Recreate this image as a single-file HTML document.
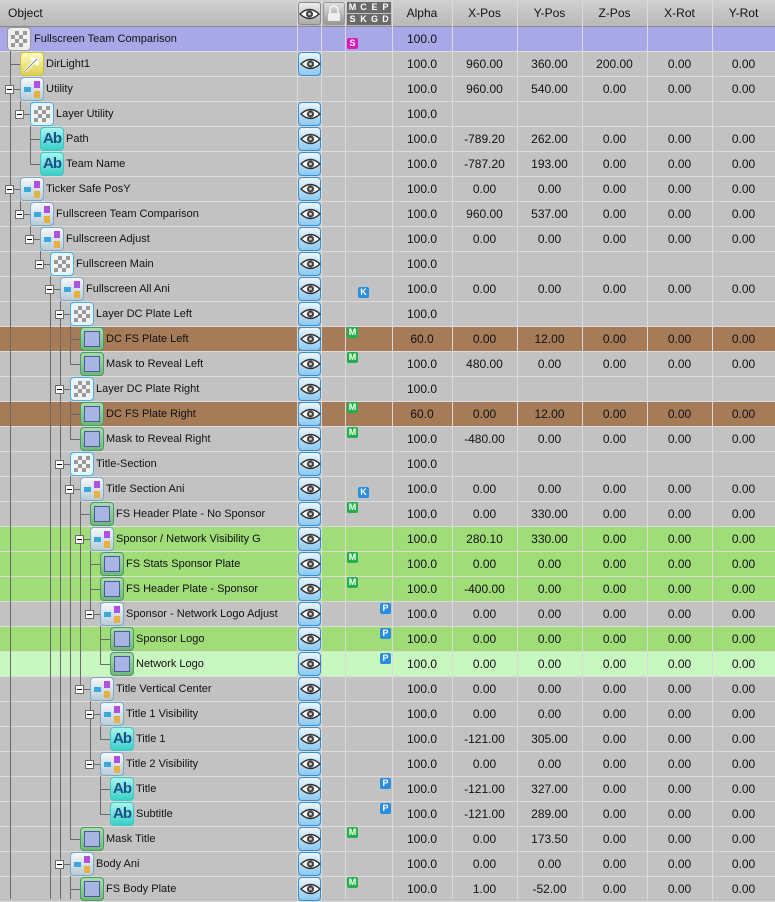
<!DOCTYPE html>
<html><head><meta charset="utf-8"><style>
*{box-sizing:border-box;margin:0;padding:0}
body{width:775px;height:899px;overflow:hidden;background:#c2c2c2;font-family:"Liberation Sans",sans-serif;font-size:12px;color:#111;position:relative}
.hd{position:absolute;left:0;top:0;width:775px;height:27px;background:linear-gradient(#d2d2d2,#b8b8b8);border-bottom:1px solid #8a8a8a}
.hd span{position:absolute;top:0;line-height:27px;text-align:center}
.r{position:absolute;left:0;width:775px;height:25px;border-bottom:1px solid #dcdcdc}
.r span{position:absolute;top:0;line-height:24px;white-space:nowrap}
.r span.n{font-size:11px}
.c{position:absolute;top:0;width:1px;height:899px;background:#dadada}
.v{text-align:center}
.a{left:392px;width:60px}.x{left:452px;width:65px}.y{left:517px;width:65px}.z{left:582px;width:65px}.xr{left:647px;width:65px}.yr{left:712px;width:63px}
.ic{position:absolute;top:0;width:24px;height:24px;border-radius:4px;border:1px solid #777}
.ck{border-color:#4ab0e0;background:#e8f4fb;padding:3px}
.ck i{display:block;width:16px;height:16px;background:repeating-conic-gradient(#9a9a9a 0 25%,#f2f2f2 0 50%) 0 0/8px 8px}
.ck0{border-color:#999;background:#eee}
.gr{border-color:#7aa8c0;background:linear-gradient(#f4f8fa,#b8ccd8)}
.gr b{position:absolute;display:block}
.ab{border-color:#40c8c0;background:linear-gradient(#a8f4ee,#38d0c8);color:#1b4f86;font-weight:bold;font-size:15px;line-height:22px;text-align:center;letter-spacing:-1px}
.pl{border-color:#4a9a5a;background:linear-gradient(#a8dcae,#70b87c);padding:3px}
.pl i{display:block;width:16px;height:16px;background:#a8b4e4;border:1px solid #4c5a9c}
.lt{border-color:#c8c040;background:linear-gradient(#fffcc0,#dcd050)}
.eye{position:absolute;left:298px;top:0;width:23px;height:24px;border-radius:4px;border:1px solid #3a8ed0;background:linear-gradient(#eaf6ff,#8ccaf4)}
.eye svg{position:absolute;left:1px;top:5px}
.bd{position:absolute;width:11px;height:11px;border-radius:2px;color:#fff;font-size:9px;font-weight:bold;line-height:11px;text-align:center}
.M{background:#22b048;left:347px;top:0}
.S{background:#e018b8;left:347px;top:11px}
.K{background:#2a8ee0;left:358px;top:10px}
.P{background:#2a8ee0;left:380px;top:1px}
.vl{position:absolute;width:1px;background:#6a6a6a}
.hl{position:absolute;height:1px;background:#6a6a6a}
.mb{position:absolute;width:9px;height:9px;border:1px solid #6a6a6a;background:#fff}
.mb:after{content:"";position:absolute;left:1px;top:3px;width:5px;height:1px;background:#000}
.mc{position:absolute;width:11px;height:11px;background:#6a6a6a;color:#fff;font-size:9px;font-weight:bold;line-height:11px;text-align:center}
</style></head><body>
<svg width="0" height="0" style="position:absolute"><symbol id="e" viewBox="0 0 21 12"><path d="M1 6 Q10.5 -3 20 6 Q10.5 15 1 6Z" fill="#fff" stroke="#333" stroke-width="1.5"/><circle cx="10.5" cy="6" r="3.6" fill="#444"/><circle cx="10.5" cy="6" r="1.4" fill="#ccc"/></symbol></svg>

<div class="hd">
<span style="left:8px;text-align:left">Object</span>
<div style="position:absolute;left:298px;top:2px;width:23px;height:23px;border-radius:3px;background:linear-gradient(#eee,#aaa);border:1px solid #888"><svg width="21" height="12" style="position:absolute;left:0;top:5px"><use href="#e"/></svg></div>
<div style="position:absolute;left:323px;top:2px;width:22px;height:23px;border-radius:3px;background:linear-gradient(#ddd,#999);border:1px solid #999"><svg width="20" height="21"><path d="M6 10 V7 A4 4 0 0 1 14 7 V10" stroke="#eee" stroke-width="2" fill="none"/><rect x="4" y="10" width="12" height="8" rx="1" fill="#eee"/></svg></div>
<div class="mc" style="left:347px;top:2px">M</div><div class="mc" style="left:358px;top:2px">C</div><div class="mc" style="left:369px;top:2px">E</div><div class="mc" style="left:380px;top:2px">P</div>
<div class="mc" style="left:347px;top:14px">S</div><div class="mc" style="left:358px;top:14px">K</div><div class="mc" style="left:369px;top:14px">G</div><div class="mc" style="left:380px;top:14px">D</div>
<span class="a">Alpha</span><span class="x">X-Pos</span><span class="y">Y-Pos</span><span class="z">Z-Pos</span><span class="xr">X-Rot</span><span class="yr">Y-Rot</span>
</div>

<div class="r" style="top:27px;background:#a8a8e8"><div class="ic ck ck0" style="left:7px"><i></i></div><span class="n" style="left:34px">Fullscreen Team Comparison</span><div class="bd S">S</div><span class="v a">100.0</span></div>
<div class="r" style="top:52px"><div class="ic lt" style="left:20px"><svg width="22" height="22"><path d="M4 18 L16 6 M10 6 L16 6 L16 12" stroke="#fff" stroke-width="3" fill="none"/><path d="M4 18 L16 6" stroke="#888" stroke-width="1"/></svg></div><span class="n" style="left:46px">DirLight1</span><div class="eye"><svg width="21" height="12"><use href="#e"/></svg></div><span class="v a">100.0</span><span class="v x">960.00</span><span class="v y">360.00</span><span class="v z">200.00</span><span class="v xr">0.00</span><span class="v yr">0.00</span></div>
<div class="r" style="top:77px"><div class="ic gr" style="left:20px"><b style="left:3px;top:9px;width:7px;height:5px;background:#3aa8e0"></b><b style="left:13px;top:3px;width:6px;height:7px;background:#b050e0"></b><b style="left:13px;top:13px;width:6px;height:7px;background:#e8b040"></b></div><span class="n" style="left:46px">Utility</span><span class="v a">100.0</span><span class="v x">960.00</span><span class="v y">540.00</span><span class="v z">0.00</span><span class="v xr">0.00</span><span class="v yr">0.00</span></div>
<div class="r" style="top:102px"><div class="ic ck" style="left:30px"><i></i></div><span class="n" style="left:56px">Layer Utility</span><div class="eye"><svg width="21" height="12"><use href="#e"/></svg></div><span class="v a">100.0</span></div>
<div class="r" style="top:127px"><div class="ic ab" style="left:40px">Ab</div><span class="n" style="left:66px">Path</span><div class="eye"><svg width="21" height="12"><use href="#e"/></svg></div><span class="v a">100.0</span><span class="v x">-789.20</span><span class="v y">262.00</span><span class="v z">0.00</span><span class="v xr">0.00</span><span class="v yr">0.00</span></div>
<div class="r" style="top:152px"><div class="ic ab" style="left:40px">Ab</div><span class="n" style="left:66px">Team Name</span><div class="eye"><svg width="21" height="12"><use href="#e"/></svg></div><span class="v a">100.0</span><span class="v x">-787.20</span><span class="v y">193.00</span><span class="v z">0.00</span><span class="v xr">0.00</span><span class="v yr">0.00</span></div>
<div class="r" style="top:177px"><div class="ic gr" style="left:20px"><b style="left:3px;top:9px;width:7px;height:5px;background:#3aa8e0"></b><b style="left:13px;top:3px;width:6px;height:7px;background:#b050e0"></b><b style="left:13px;top:13px;width:6px;height:7px;background:#e8b040"></b></div><span class="n" style="left:46px">Ticker Safe PosY</span><div class="eye"><svg width="21" height="12"><use href="#e"/></svg></div><span class="v a">100.0</span><span class="v x">0.00</span><span class="v y">0.00</span><span class="v z">0.00</span><span class="v xr">0.00</span><span class="v yr">0.00</span></div>
<div class="r" style="top:202px"><div class="ic gr" style="left:30px"><b style="left:3px;top:9px;width:7px;height:5px;background:#3aa8e0"></b><b style="left:13px;top:3px;width:6px;height:7px;background:#b050e0"></b><b style="left:13px;top:13px;width:6px;height:7px;background:#e8b040"></b></div><span class="n" style="left:56px">Fullscreen Team Comparison</span><div class="eye"><svg width="21" height="12"><use href="#e"/></svg></div><span class="v a">100.0</span><span class="v x">960.00</span><span class="v y">537.00</span><span class="v z">0.00</span><span class="v xr">0.00</span><span class="v yr">0.00</span></div>
<div class="r" style="top:227px"><div class="ic gr" style="left:40px"><b style="left:3px;top:9px;width:7px;height:5px;background:#3aa8e0"></b><b style="left:13px;top:3px;width:6px;height:7px;background:#b050e0"></b><b style="left:13px;top:13px;width:6px;height:7px;background:#e8b040"></b></div><span class="n" style="left:66px">Fullscreen Adjust</span><div class="eye"><svg width="21" height="12"><use href="#e"/></svg></div><span class="v a">100.0</span><span class="v x">0.00</span><span class="v y">0.00</span><span class="v z">0.00</span><span class="v xr">0.00</span><span class="v yr">0.00</span></div>
<div class="r" style="top:252px"><div class="ic ck" style="left:50px"><i></i></div><span class="n" style="left:76px">Fullscreen Main</span><div class="eye"><svg width="21" height="12"><use href="#e"/></svg></div><span class="v a">100.0</span></div>
<div class="r" style="top:277px"><div class="ic gr" style="left:60px"><b style="left:3px;top:9px;width:7px;height:5px;background:#3aa8e0"></b><b style="left:13px;top:3px;width:6px;height:7px;background:#b050e0"></b><b style="left:13px;top:13px;width:6px;height:7px;background:#e8b040"></b></div><span class="n" style="left:86px">Fullscreen All Ani</span><div class="eye"><svg width="21" height="12"><use href="#e"/></svg></div><div class="bd K">K</div><span class="v a">100.0</span><span class="v x">0.00</span><span class="v y">0.00</span><span class="v z">0.00</span><span class="v xr">0.00</span><span class="v yr">0.00</span></div>
<div class="r" style="top:302px"><div class="ic ck" style="left:70px"><i></i></div><span class="n" style="left:96px">Layer DC Plate Left</span><div class="eye"><svg width="21" height="12"><use href="#e"/></svg></div><span class="v a">100.0</span></div>
<div class="r" style="top:327px;background:#a67c58"><div class="ic pl" style="left:80px"><i></i></div><span class="n" style="left:106px">DC FS Plate Left</span><div class="eye"><svg width="21" height="12"><use href="#e"/></svg></div><div class="bd M">M</div><span class="v a">60.0</span><span class="v x">0.00</span><span class="v y">12.00</span><span class="v z">0.00</span><span class="v xr">0.00</span><span class="v yr">0.00</span></div>
<div class="r" style="top:352px"><div class="ic pl" style="left:80px"><i></i></div><span class="n" style="left:106px">Mask to Reveal Left</span><div class="eye"><svg width="21" height="12"><use href="#e"/></svg></div><div class="bd M">M</div><span class="v a">100.0</span><span class="v x">480.00</span><span class="v y">0.00</span><span class="v z">0.00</span><span class="v xr">0.00</span><span class="v yr">0.00</span></div>
<div class="r" style="top:377px"><div class="ic ck" style="left:70px"><i></i></div><span class="n" style="left:96px">Layer DC Plate Right</span><div class="eye"><svg width="21" height="12"><use href="#e"/></svg></div><span class="v a">100.0</span></div>
<div class="r" style="top:402px;background:#a67c58"><div class="ic pl" style="left:80px"><i></i></div><span class="n" style="left:106px">DC FS Plate Right</span><div class="eye"><svg width="21" height="12"><use href="#e"/></svg></div><div class="bd M">M</div><span class="v a">60.0</span><span class="v x">0.00</span><span class="v y">12.00</span><span class="v z">0.00</span><span class="v xr">0.00</span><span class="v yr">0.00</span></div>
<div class="r" style="top:427px"><div class="ic pl" style="left:80px"><i></i></div><span class="n" style="left:106px">Mask to Reveal Right</span><div class="eye"><svg width="21" height="12"><use href="#e"/></svg></div><div class="bd M">M</div><span class="v a">100.0</span><span class="v x">-480.00</span><span class="v y">0.00</span><span class="v z">0.00</span><span class="v xr">0.00</span><span class="v yr">0.00</span></div>
<div class="r" style="top:452px"><div class="ic ck" style="left:70px"><i></i></div><span class="n" style="left:96px">Title-Section</span><div class="eye"><svg width="21" height="12"><use href="#e"/></svg></div><span class="v a">100.0</span></div>
<div class="r" style="top:477px"><div class="ic gr" style="left:80px"><b style="left:3px;top:9px;width:7px;height:5px;background:#3aa8e0"></b><b style="left:13px;top:3px;width:6px;height:7px;background:#b050e0"></b><b style="left:13px;top:13px;width:6px;height:7px;background:#e8b040"></b></div><span class="n" style="left:106px">Title Section Ani</span><div class="eye"><svg width="21" height="12"><use href="#e"/></svg></div><div class="bd K">K</div><span class="v a">100.0</span><span class="v x">0.00</span><span class="v y">0.00</span><span class="v z">0.00</span><span class="v xr">0.00</span><span class="v yr">0.00</span></div>
<div class="r" style="top:502px"><div class="ic pl" style="left:90px"><i></i></div><span class="n" style="left:116px">FS Header Plate - No Sponsor</span><div class="eye"><svg width="21" height="12"><use href="#e"/></svg></div><div class="bd M">M</div><span class="v a">100.0</span><span class="v x">0.00</span><span class="v y">330.00</span><span class="v z">0.00</span><span class="v xr">0.00</span><span class="v yr">0.00</span></div>
<div class="r" style="top:527px;background:#a0dc78"><div class="ic gr" style="left:90px"><b style="left:3px;top:9px;width:7px;height:5px;background:#3aa8e0"></b><b style="left:13px;top:3px;width:6px;height:7px;background:#b050e0"></b><b style="left:13px;top:13px;width:6px;height:7px;background:#e8b040"></b></div><span class="n" style="left:116px">Sponsor / Network Visibility G</span><div class="eye"><svg width="21" height="12"><use href="#e"/></svg></div><span class="v a">100.0</span><span class="v x">280.10</span><span class="v y">330.00</span><span class="v z">0.00</span><span class="v xr">0.00</span><span class="v yr">0.00</span></div>
<div class="r" style="top:552px;background:#a0dc78"><div class="ic pl" style="left:100px"><i></i></div><span class="n" style="left:126px">FS Stats Sponsor Plate</span><div class="eye"><svg width="21" height="12"><use href="#e"/></svg></div><div class="bd M">M</div><span class="v a">100.0</span><span class="v x">0.00</span><span class="v y">0.00</span><span class="v z">0.00</span><span class="v xr">0.00</span><span class="v yr">0.00</span></div>
<div class="r" style="top:577px;background:#a0dc78"><div class="ic pl" style="left:100px"><i></i></div><span class="n" style="left:126px">FS Header Plate - Sponsor</span><div class="eye"><svg width="21" height="12"><use href="#e"/></svg></div><div class="bd M">M</div><span class="v a">100.0</span><span class="v x">-400.00</span><span class="v y">0.00</span><span class="v z">0.00</span><span class="v xr">0.00</span><span class="v yr">0.00</span></div>
<div class="r" style="top:602px"><div class="ic gr" style="left:100px"><b style="left:3px;top:9px;width:7px;height:5px;background:#3aa8e0"></b><b style="left:13px;top:3px;width:6px;height:7px;background:#b050e0"></b><b style="left:13px;top:13px;width:6px;height:7px;background:#e8b040"></b></div><span class="n" style="left:126px">Sponsor - Network Logo Adjust</span><div class="eye"><svg width="21" height="12"><use href="#e"/></svg></div><div class="bd P">P</div><span class="v a">100.0</span><span class="v x">0.00</span><span class="v y">0.00</span><span class="v z">0.00</span><span class="v xr">0.00</span><span class="v yr">0.00</span></div>
<div class="r" style="top:627px;background:#a0dc78"><div class="ic pl" style="left:110px"><i></i></div><span class="n" style="left:136px">Sponsor Logo</span><div class="eye"><svg width="21" height="12"><use href="#e"/></svg></div><div class="bd P">P</div><span class="v a">100.0</span><span class="v x">0.00</span><span class="v y">0.00</span><span class="v z">0.00</span><span class="v xr">0.00</span><span class="v yr">0.00</span></div>
<div class="r" style="top:652px;background:#c8f8c0"><div class="ic pl" style="left:110px"><i></i></div><span class="n" style="left:136px">Network Logo</span><div class="eye"><svg width="21" height="12"><use href="#e"/></svg></div><div class="bd P">P</div><span class="v a">100.0</span><span class="v x">0.00</span><span class="v y">0.00</span><span class="v z">0.00</span><span class="v xr">0.00</span><span class="v yr">0.00</span></div>
<div class="r" style="top:677px"><div class="ic gr" style="left:90px"><b style="left:3px;top:9px;width:7px;height:5px;background:#3aa8e0"></b><b style="left:13px;top:3px;width:6px;height:7px;background:#b050e0"></b><b style="left:13px;top:13px;width:6px;height:7px;background:#e8b040"></b></div><span class="n" style="left:116px">Title Vertical Center</span><div class="eye"><svg width="21" height="12"><use href="#e"/></svg></div><span class="v a">100.0</span><span class="v x">0.00</span><span class="v y">0.00</span><span class="v z">0.00</span><span class="v xr">0.00</span><span class="v yr">0.00</span></div>
<div class="r" style="top:702px"><div class="ic gr" style="left:100px"><b style="left:3px;top:9px;width:7px;height:5px;background:#3aa8e0"></b><b style="left:13px;top:3px;width:6px;height:7px;background:#b050e0"></b><b style="left:13px;top:13px;width:6px;height:7px;background:#e8b040"></b></div><span class="n" style="left:126px">Title 1 Visibility</span><div class="eye"><svg width="21" height="12"><use href="#e"/></svg></div><span class="v a">100.0</span><span class="v x">0.00</span><span class="v y">0.00</span><span class="v z">0.00</span><span class="v xr">0.00</span><span class="v yr">0.00</span></div>
<div class="r" style="top:727px"><div class="ic ab" style="left:110px">Ab</div><span class="n" style="left:136px">Title 1</span><div class="eye"><svg width="21" height="12"><use href="#e"/></svg></div><span class="v a">100.0</span><span class="v x">-121.00</span><span class="v y">305.00</span><span class="v z">0.00</span><span class="v xr">0.00</span><span class="v yr">0.00</span></div>
<div class="r" style="top:752px"><div class="ic gr" style="left:100px"><b style="left:3px;top:9px;width:7px;height:5px;background:#3aa8e0"></b><b style="left:13px;top:3px;width:6px;height:7px;background:#b050e0"></b><b style="left:13px;top:13px;width:6px;height:7px;background:#e8b040"></b></div><span class="n" style="left:126px">Title 2 Visibility</span><div class="eye"><svg width="21" height="12"><use href="#e"/></svg></div><span class="v a">100.0</span><span class="v x">0.00</span><span class="v y">0.00</span><span class="v z">0.00</span><span class="v xr">0.00</span><span class="v yr">0.00</span></div>
<div class="r" style="top:777px"><div class="ic ab" style="left:110px">Ab</div><span class="n" style="left:136px">Title</span><div class="eye"><svg width="21" height="12"><use href="#e"/></svg></div><div class="bd P">P</div><span class="v a">100.0</span><span class="v x">-121.00</span><span class="v y">327.00</span><span class="v z">0.00</span><span class="v xr">0.00</span><span class="v yr">0.00</span></div>
<div class="r" style="top:802px"><div class="ic ab" style="left:110px">Ab</div><span class="n" style="left:136px">Subtitle</span><div class="eye"><svg width="21" height="12"><use href="#e"/></svg></div><div class="bd P">P</div><span class="v a">100.0</span><span class="v x">-121.00</span><span class="v y">289.00</span><span class="v z">0.00</span><span class="v xr">0.00</span><span class="v yr">0.00</span></div>
<div class="r" style="top:827px"><div class="ic pl" style="left:80px"><i></i></div><span class="n" style="left:106px">Mask Title</span><div class="eye"><svg width="21" height="12"><use href="#e"/></svg></div><div class="bd M">M</div><span class="v a">100.0</span><span class="v x">0.00</span><span class="v y">173.50</span><span class="v z">0.00</span><span class="v xr">0.00</span><span class="v yr">0.00</span></div>
<div class="r" style="top:852px"><div class="ic gr" style="left:70px"><b style="left:3px;top:9px;width:7px;height:5px;background:#3aa8e0"></b><b style="left:13px;top:3px;width:6px;height:7px;background:#b050e0"></b><b style="left:13px;top:13px;width:6px;height:7px;background:#e8b040"></b></div><span class="n" style="left:96px">Body Ani</span><div class="eye"><svg width="21" height="12"><use href="#e"/></svg></div><span class="v a">100.0</span><span class="v x">0.00</span><span class="v y">0.00</span><span class="v z">0.00</span><span class="v xr">0.00</span><span class="v yr">0.00</span></div>
<div class="r" style="top:877px"><div class="ic pl" style="left:80px"><i></i></div><span class="n" style="left:106px">FS Body Plate</span><div class="eye"><svg width="21" height="12"><use href="#e"/></svg></div><div class="bd M">M</div><span class="v a">100.0</span><span class="v x">1.00</span><span class="v y">-52.00</span><span class="v z">0.00</span><span class="v xr">0.00</span><span class="v yr">0.00</span></div>

<div class="c" style="left:297px"></div><div class="c" style="left:321px"></div><div class="c" style="left:345px"></div><div class="c" style="left:392px"></div><div class="c" style="left:452px"></div><div class="c" style="left:517px"></div><div class="c" style="left:582px"></div><div class="c" style="left:647px"></div><div class="c" style="left:712px"></div>

<div class="vl" style="left:10px;top:51px;height:848px"></div>
<div class="vl" style="left:20px;top:101px;height:13px"></div>
<div class="vl" style="left:20px;top:201px;height:13px"></div>
<div class="vl" style="left:30px;top:126px;height:38px"></div>
<div class="vl" style="left:30px;top:226px;height:13px"></div>
<div class="vl" style="left:40px;top:251px;height:13px"></div>
<div class="vl" style="left:50px;top:276px;height:623px"></div>
<div class="vl" style="left:60px;top:301px;height:598px"></div>
<div class="vl" style="left:70px;top:326px;height:38px"></div>
<div class="vl" style="left:70px;top:401px;height:38px"></div>
<div class="vl" style="left:70px;top:476px;height:363px"></div>
<div class="vl" style="left:70px;top:876px;height:23px"></div>
<div class="vl" style="left:80px;top:501px;height:188px"></div>
<div class="vl" style="left:90px;top:551px;height:63px"></div>
<div class="vl" style="left:90px;top:701px;height:63px"></div>
<div class="vl" style="left:100px;top:626px;height:38px"></div>
<div class="vl" style="left:100px;top:726px;height:13px"></div>
<div class="vl" style="left:100px;top:776px;height:38px"></div>

<div class="hl" style="left:10px;top:64px;width:10px"></div>
<div class="hl" style="left:10px;top:89px;width:10px"></div>
<div class="hl" style="left:20px;top:114px;width:10px"></div>
<div class="hl" style="left:30px;top:139px;width:10px"></div>
<div class="hl" style="left:30px;top:164px;width:10px"></div>
<div class="hl" style="left:10px;top:189px;width:10px"></div>
<div class="hl" style="left:20px;top:214px;width:10px"></div>
<div class="hl" style="left:30px;top:239px;width:10px"></div>
<div class="hl" style="left:40px;top:264px;width:10px"></div>
<div class="hl" style="left:50px;top:289px;width:10px"></div>
<div class="hl" style="left:60px;top:314px;width:10px"></div>
<div class="hl" style="left:70px;top:339px;width:10px"></div>
<div class="hl" style="left:70px;top:364px;width:10px"></div>
<div class="hl" style="left:60px;top:389px;width:10px"></div>
<div class="hl" style="left:70px;top:414px;width:10px"></div>
<div class="hl" style="left:70px;top:439px;width:10px"></div>
<div class="hl" style="left:60px;top:464px;width:10px"></div>
<div class="hl" style="left:70px;top:489px;width:10px"></div>
<div class="hl" style="left:80px;top:514px;width:10px"></div>
<div class="hl" style="left:80px;top:539px;width:10px"></div>
<div class="hl" style="left:90px;top:564px;width:10px"></div>
<div class="hl" style="left:90px;top:589px;width:10px"></div>
<div class="hl" style="left:90px;top:614px;width:10px"></div>
<div class="hl" style="left:100px;top:639px;width:10px"></div>
<div class="hl" style="left:100px;top:664px;width:10px"></div>
<div class="hl" style="left:80px;top:689px;width:10px"></div>
<div class="hl" style="left:90px;top:714px;width:10px"></div>
<div class="hl" style="left:100px;top:739px;width:10px"></div>
<div class="hl" style="left:90px;top:764px;width:10px"></div>
<div class="hl" style="left:100px;top:789px;width:10px"></div>
<div class="hl" style="left:100px;top:814px;width:10px"></div>
<div class="hl" style="left:70px;top:839px;width:10px"></div>
<div class="hl" style="left:60px;top:864px;width:10px"></div>
<div class="hl" style="left:70px;top:889px;width:10px"></div>

<div class="mb" style="left:5px;top:85px"></div>
<div class="mb" style="left:15px;top:110px"></div>
<div class="mb" style="left:5px;top:185px"></div>
<div class="mb" style="left:15px;top:210px"></div>
<div class="mb" style="left:25px;top:235px"></div>
<div class="mb" style="left:35px;top:260px"></div>
<div class="mb" style="left:45px;top:285px"></div>
<div class="mb" style="left:55px;top:310px"></div>
<div class="mb" style="left:55px;top:385px"></div>
<div class="mb" style="left:55px;top:460px"></div>
<div class="mb" style="left:65px;top:485px"></div>
<div class="mb" style="left:75px;top:535px"></div>
<div class="mb" style="left:85px;top:610px"></div>
<div class="mb" style="left:75px;top:685px"></div>
<div class="mb" style="left:85px;top:710px"></div>
<div class="mb" style="left:85px;top:760px"></div>
<div class="mb" style="left:55px;top:860px"></div>
</body></html>
